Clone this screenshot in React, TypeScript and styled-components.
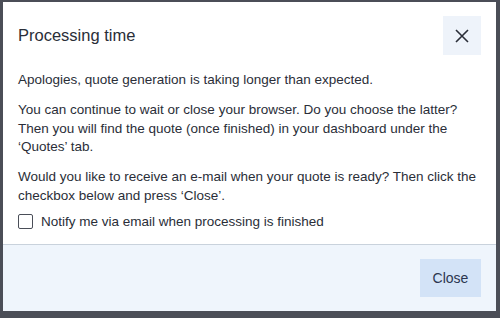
import React, { useState } from 'react'
import styled, { createGlobalStyle } from 'styled-components'

const GlobalStyle = createGlobalStyle`
  html, body {
    margin: 0;
    padding: 0;
    background: #4b4e57;
  }
  body {
    font-family: 'Liberation Sans', Arial, sans-serif;
  }
`

const Backdrop = styled.div`
  width: 500px;
  height: 318px;
  padding: 2px 4px 7px 3px;
  box-sizing: border-box;
  background: #4b4e57;
`

const Dialog = styled.div`
  display: flex;
  flex-direction: column;
  height: 100%;
  background: #ffffff;
  color: #2a2e38;
`

const Header = styled.div`
  display: flex;
  align-items: center;
  justify-content: space-between;
  padding: 14px 15px 0 15px;
`

const Title = styled.h2`
  margin: 0;
  font-size: 16.5px;
  font-weight: 400;
  color: #2a2e38;
`

const IconButton = styled.button`
  display: flex;
  align-items: center;
  justify-content: center;
  width: 38px;
  height: 39px;
  padding: 0;
  border: none;
  background: #eef3fa;
  color: #2a2e38;
  cursor: pointer;
`

const Body = styled.div`
  flex: 1;
  padding: 16px 15px 0 15px;
  font-size: 13.5px;
  line-height: 18.5px;
`

const Paragraph = styled.p`
  margin: 0 0 11.5px 0;
`

const CheckRow = styled.label`
  display: flex;
  align-items: center;
  gap: 8px;
  margin-top: -4px;
  cursor: pointer;
`

const Box = styled.span<{ checked: boolean }>`
  width: 13px;
  height: 13px;
  border: 1.5px solid #4a4e58;
  border-radius: 2px;
  background: ${(p) => (p.checked ? '#2a4f8a' : '#fff')};
`

const Footer = styled.div`
  display: flex;
  justify-content: flex-end;
  align-items: center;
  height: 66px;
  padding: 0 15px;
  border-top: 1px solid #c9d2dc;
  background: #eff5fc;
`

const CloseButton = styled.button`
  width: 61px;
  height: 38px;
  border: none;
  background: #d3e3f7;
  color: #2b3650;
  font-family: inherit;
  font-size: 14px;
  cursor: pointer;
`

const App = () => {
  const [notify, setNotify] = useState(false)

  return (
    <Backdrop>
      <GlobalStyle />
      <Dialog>
        <Header>
          <Title>Processing time</Title>
          <IconButton aria-label="close">
            <svg width="16" height="16" viewBox="0 0 16 16">
              <path d="M2 2 L14 14 M14 2 L2 14" stroke="currentColor" strokeWidth="1.6" />
            </svg>
          </IconButton>
        </Header>
        <Body>
          <Paragraph>Apologies, quote generation is taking longer than expected.</Paragraph>
          <Paragraph>
            You can continue to wait or close your browser. Do you choose the latter?
            Then you will find the quote (once finished) in your dashboard under the
            ‘Quotes’ tab.
          </Paragraph>
          <Paragraph>
            Would you like to receive an e-mail when your quote is ready? Then click the
            checkbox below and press ‘Close’.
          </Paragraph>
          <CheckRow onClick={() => setNotify(!notify)}>
            <Box checked={notify} />
            Notify me via email when processing is finished
          </CheckRow>
        </Body>
        <Footer>
          <CloseButton>Close</CloseButton>
        </Footer>
      </Dialog>
    </Backdrop>
  )
}

export default App
